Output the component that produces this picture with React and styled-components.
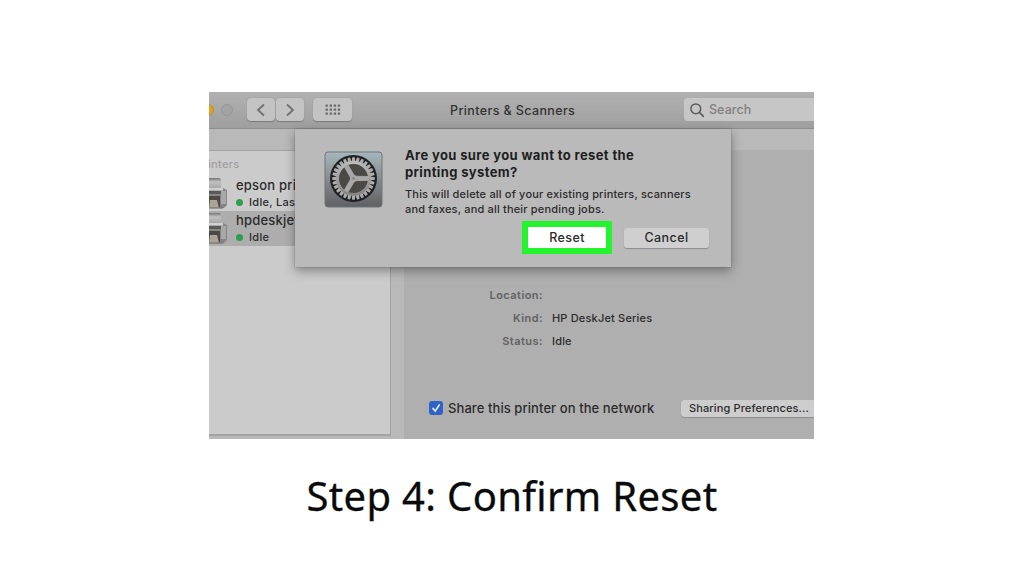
import React from 'react';
import styled, { createGlobalStyle } from 'styled-components';

const GlobalStyle = createGlobalStyle`
  * {
    box-sizing: border-box;
  }
  body {
    margin: 0;
    background: #fff;
    font-family: Inter, "Liberation Sans", sans-serif;
  }
  p, h1, h2 {
    margin: 0;
  }
`

const Page = styled.main`
  width: 1024px;
  height: 576px;
  padding-top: 92px;
  overflow: hidden;
  display: flex;
  flex-direction: column;
`

const Window = styled.section`
  position: relative;
  width: 605px;
  height: 347px;
  margin-left: 209px;
  overflow: hidden;
  display: flex;
  flex-direction: column;
  background: #b9b9b9;
  color: #2b2b2b;
`

const Toolbar = styled.header`
  flex: none;
  height: 37px;
  display: flex;
  align-items: center;
  background: linear-gradient(#b1b1b1, #9f9f9f);
  border-bottom: 1px solid #8e8e8e;
`

const Light = styled.span`
  flex: none;
  width: 12px;
  height: 12px;
  border-radius: 50%;
  margin-left: ${({ $left }) => $left}px;
  background: ${({ $color }) => $color};
  border: 1px solid ${({ $edge }) => $edge};
`

const ToolButton = styled.button`
  flex: none;
  width: ${({ $width }) => $width}px;
  height: 23px;
  margin: 0 0 1px ${({ $left }) => $left}px;
  padding: 0;
  display: flex;
  align-items: center;
  justify-content: center;
  border: 0;
  border-radius: 4px;
  background: #c3c3c3;
  box-shadow: 0 0.5px 1px rgba(0, 0, 0, 0.25);
`

const WindowTitle = styled.h2`
  margin-left: 98px;
  width: 234px;
  padding-top: 1px;
  font-size: 12.5px;
  font-weight: 500;
  line-height: 16px;
  letter-spacing: 0.38px;
  white-space: nowrap;
  color: #333;
`

const SearchField = styled.div`
  flex: 1;
  height: 23px;
  margin-bottom: 1px;
  padding-left: 5px;
  display: flex;
  align-items: center;
  gap: 4px;
  border-radius: 4px 0 0 4px;
  background: #c6c6c6;
  color: #808080;
  font-size: 12.5px;
  font-weight: 450;
  letter-spacing: 0.05px;
`

const Body = styled.div`
  flex: 1;
  padding-top: 21px;
  display: flex;
  gap: 13px;
`

const Sidebar = styled.aside`
  width: 182px;
  height: 286px;
  border: solid #a3a3a3;
  border-width: 1px 1px 2px 0;
  background: #cbcbcb;
  overflow: hidden;
`

const GroupLabel = styled.p`
  height: 25px;
  margin-left: -13px;
  padding-top: 5px;
  font-size: 11px;
  font-weight: 500;
  line-height: 16px;
  letter-spacing: 0.3px;
  color: #a0a0a0;
`

const PrinterRow = styled.div`
  height: 35px;
  display: flex;
  gap: 7px;
  background: ${({ $selected }) => ($selected ? '#adadad' : 'transparent')};
`

const PrinterInfo = styled.div`
  padding-top: 1px;
  white-space: nowrap;
`

const PrinterName = styled.p`
  padding-left: 1px;
  font-size: 13px;
  line-height: 16px;
  letter-spacing: 0.2px;
  font-weight: 450;
`

const PrinterStatus = styled.p`
  display: flex;
  align-items: center;
  gap: 6px;
  padding-left: 1px;
  font-size: 11px;
  font-weight: 450;
  line-height: 18px;
  letter-spacing: 0.3px;
`

const Dot = styled.span`
  width: 7px;
  height: 7px;
  border-radius: 50%;
  background: #2f9e4c;
`

const Details = styled.div`
  flex: 1;
  height: 289px;
  padding-top: 133px;
  background: #afafaf;
`

const Field = styled.div`
  display: flex;
  gap: 9px;
  height: 23px;
  align-items: center;
  font-size: 11px;
  font-weight: 500;
  letter-spacing: 0.18px;
`

const FieldLabel = styled.span`
  width: 139px;
  text-align: right;
  font-weight: 600;
  letter-spacing: 0.45px;
  color: #626262;
`

const ShareRow = styled.div`
  display: flex;
  align-items: center;
  margin-top: 47px;
  padding-left: 25px;
  height: 18px;
`

const CheckBox = styled.span`
  width: 14px;
  height: 14px;
  display: flex;
  border-radius: 3px;
  background: #2f62c4;
`

const ShareLabel = styled.span`
  width: 233px;
  margin-left: 5px;
  font-size: 13px;
  font-weight: 450;
  letter-spacing: 0.08px;
  white-space: nowrap;
`

const SharingButton = styled.button`
  flex: 1;
  height: 17px;
  padding: 0 0 0 8px;
  border: 0;
  border-radius: 4px 0 0 4px;
  background: #cdcdcd;
  box-shadow: 0 1px 1px rgba(0, 0, 0, 0.2);
  color: #2b2b2b;
  font: 500 11px/17px Inter, sans-serif;
  letter-spacing: 0.12px;
  text-align: left;
  white-space: nowrap;
`

const Dialog = styled.div`
  position: absolute;
  top: 37px;
  left: 86px;
  width: 436px;
  height: 138px;
  padding: 22px 22px 0 29px;
  display: flex;
  gap: 21px;
  background: #bababa;
  box-shadow: 0 4px 10px rgba(0, 0, 0, 0.35), 0 0 1px rgba(0, 0, 0, 0.45);
`

const DialogContent = styled.div`
  flex: 1;
  margin-top: -4px;
`

const DialogTitle = styled.h2`
  font-size: 13px;
  font-weight: 700;
  line-height: 16.5px;
  letter-spacing: 0.37px;
  color: #1f1f1f;
`

const DialogText = styled.p`
  margin-top: 7px;
  font-size: 11px;
  font-weight: 450;
  line-height: 14.5px;
  letter-spacing: 0.18px;
  white-space: nowrap;
`

const Actions = styled.div`
  display: flex;
  align-items: center;
  justify-content: flex-end;
  gap: 12px;
  margin-top: 5px;
`

const Highlight = styled.div`
  padding: 6px;
  background: #24f42e;
`

const DialogButton = styled.button`
  display: block;
  width: ${({ $primary }) => ($primary ? 78 : 85)}px;
  height: ${({ $primary }) => ($primary ? 21 : 20)}px;
  padding: 0;
  border: 0;
  border-radius: ${({ $primary }) => ($primary ? 0 : 3)}px;
  background: ${({ $primary }) => ($primary ? '#fff' : '#cfcfcf')};
  box-shadow: ${({ $primary }) => ($primary ? 'none' : '0 1px 1px rgba(0, 0, 0, 0.25)')};
  color: #2b2b2b;
  font: 500 12.5px/20px Inter, sans-serif;
  letter-spacing: 0.4px;
`

const Caption = styled.h1`
  margin-top: 29px;
  text-align: center;
  font: 400 40px/56px "Noto Sans", sans-serif;
  letter-spacing: 0.32px;
  color: #0a0a0a;
  -webkit-text-stroke: 0.3px #0a0a0a;
`

const Chevron = ({ right }) => (
  <svg width="10" height="14" viewBox="0 0 10 14" fill="none" stroke="#707070" strokeWidth="1.8">
    <path d={right ? 'M2 1.5 8 7l-6 5.5' : 'M8 1.5 2 7l6 5.5'} />
  </svg>
)

const GridIcon = () => (
  <svg width="16" height="11" viewBox="0 0 16 11" fill="#6b6b6b">
    {[0, 1, 2].map((row) =>
      [0, 1, 2, 3].map((col) => (
        <rect key={`${row}-${col}`} x={0.5 + col * 4.1} y={0.5 + row * 4} width="2.4" height="2.2" rx="0.5" />
      ))
    )}
  </svg>
)

const SearchIcon = () => (
  <svg width="16" height="16" viewBox="0 0 16 16" fill="none" stroke="#5c5c5c" strokeWidth="1.5">
    <circle cx="6.8" cy="6.8" r="4.9" />
    <path d="m10.4 10.4 4 4" strokeLinecap="round" />
  </svg>
)

const PrinterIcon = () => (
  <svg width="19" height="35" viewBox="0 0 19 35">
    <defs>
      <linearGradient id="paper" x2="0" y2="1">
        <stop stopColor="#777" />
        <stop offset=".3" stopColor="#c2c2c2" />
        <stop offset="1" stopColor="#999" />
      </linearGradient>
    </defs>
    <path d="M0 2h10q2 0 2 2v11H0z" fill="url(#paper)" />
    <path d="M0 12h14l4 2v15l-3 3H0z" fill="#858585" />
    <path d="M0 12h14v2.5H0z" fill="#d0d0d0" />
    <path d="M0 15h12v3H0z" fill="#5a5a5a" />
    <path d="M12 15h5v13h-5z" fill="#a8a8a8" />
    <path d="M0 20h11v11H0z" fill="#4d4a45" />
    <path d="M1 24h7l2 8H0z" fill="#aaa597" />
    <path d="M0 32h14" stroke="#666" />
  </svg>
)

const teeth = Array.from({ length: 28 }, (_, i) => (i * 360) / 28)

const SettingsIcon = () => (
  <svg width="60" height="57" viewBox="0 0 60 57">
    <defs>
      <linearGradient id="plate" x2="0" y2="1">
        <stop stopColor="#a5b7bd" />
        <stop offset=".45" stopColor="#8b8f91" />
        <stop offset="1" stopColor="#606063" />
      </linearGradient>
      <linearGradient id="metal" x2="0" y2="1">
        <stop stopColor="#bbb" />
        <stop offset="1" stopColor="#858585" />
      </linearGradient>
    </defs>
    <rect x="1" y="1" width="57" height="55" rx="3" fill="url(#plate)" stroke="#6d7678" />
    <circle cx="29.5" cy="27.5" r="23.5" fill="#202124" />
    {teeth.map((angle) => (
      <path key={angle} d="M28.2 6.2h2.6l.6 5h-3.8z" fill="#adadad" transform={`rotate(${angle} 29.5 27.5)`} />
    ))}
    <circle cx="29.5" cy="27.5" r="16" fill="#4b4945" stroke="url(#metal)" strokeWidth="3" />
    {[90, 210, 330].map((angle) => (
      <path key={angle} d="m27.3 27 .2-14h4l.2 14z" fill="#a8a8a8" stroke="#a8a8a8" strokeWidth="0.8" transform={`rotate(${angle} 29.5 27.5)`} />
    ))}
    <circle cx="29.5" cy="27.5" r="3.4" fill="#a6a6a6" />
    <circle cx="29.5" cy="27.5" r="1.3" fill="#808080" />
  </svg>
)

const printers = [
  { name: 'epson printer', status: 'Idle, Last Used' },
  { name: 'hpdeskjet', status: 'Idle', selected: true },
]

const fields = [
  { label: 'Location:', value: '' },
  { label: 'Kind:', value: 'HP DeskJet Series' },
  { label: 'Status:', value: 'Idle' },
]

const App = () => {
  return (
    <Page>
      <GlobalStyle />
      <Window>
        <Toolbar>
          <Light $left={-7} $color="#dca126" $edge="#c18d24" />
          <Light $left={7} $color="#a3a3a3" $edge="#969696" />
          <ToolButton $left={14} $width={28}><Chevron /></ToolButton>
          <ToolButton $left={1} $width={28}><Chevron right /></ToolButton>
          <ToolButton $left={9} $width={39}><GridIcon /></ToolButton>
          <WindowTitle>Printers &amp; Scanners</WindowTitle>
          <SearchField><SearchIcon />Search</SearchField>
        </Toolbar>
        <Body>
          <Sidebar>
            <GroupLabel>Printers</GroupLabel>
            {printers.map(({ name, status, selected }) => (
              <PrinterRow key={name} $selected={selected}>
                <PrinterIcon />
                <PrinterInfo>
                  <PrinterName>{name}</PrinterName>
                  <PrinterStatus><Dot />{status}</PrinterStatus>
                </PrinterInfo>
              </PrinterRow>
            ))}
          </Sidebar>
          <Details>
            {fields.map(({ label, value }) => (
              <Field key={label}>
                <FieldLabel>{label}</FieldLabel>
                {value}
              </Field>
            ))}
            <ShareRow>
              <CheckBox>
                <svg width="14" height="14" fill="none" stroke="#dce6f8" strokeWidth="1.7" strokeLinecap="round">
                  <path d="m4 7.4 2.2 2.7L10.2 4" />
                </svg>
              </CheckBox>
              <ShareLabel>Share this printer on the network</ShareLabel>
              <SharingButton>Sharing Preferences...</SharingButton>
            </ShareRow>
          </Details>
        </Body>
        <Dialog>
          <SettingsIcon />
          <DialogContent>
            <DialogTitle>Are you sure you want to reset the<br />printing system?</DialogTitle>
            <DialogText>
              This will delete all of your existing printers, scanners<br />
              and faxes, and all their pending jobs.
            </DialogText>
            <Actions>
              <Highlight><DialogButton $primary>Reset</DialogButton></Highlight>
              <DialogButton>Cancel</DialogButton>
            </Actions>
          </DialogContent>
        </Dialog>
      </Window>
      <Caption>Step 4: Confirm Reset</Caption>
    </Page>
  );
}

export default App;
